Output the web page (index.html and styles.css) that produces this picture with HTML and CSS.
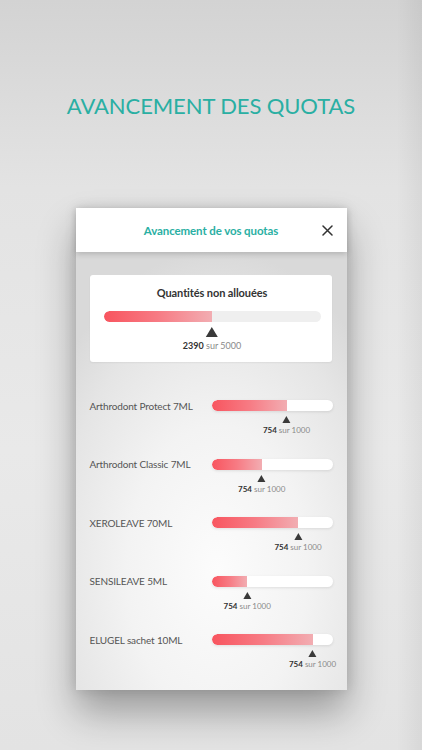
FILE: index.html
```html
<!DOCTYPE html>
<html lang="fr">
<head>
<meta charset="utf-8">
<title>Avancement des quotas</title>
<link rel="stylesheet" href="styles.css">
</head>
<body>
<div class="page">
  <h1 class="title">AVANCEMENT DES QUOTAS</h1>
  <div class="modal">
    <div class="modal-header">
      <span></span>
      <h2 class="modal-title">Avancement de vos quotas</h2>
      <button class="close" aria-label="Fermer">
        <svg width="11" height="11" viewBox="0 0 11 11"><path d="M1 1L10 10M10 1L1 10" stroke="#333" stroke-width="1.5" stroke-linecap="round"/></svg>
      </button>
    </div>
    <div class="modal-body">
      <div class="card">
        <div class="card-title">Quantités non allouées</div>
        <div class="track track-grey"><div class="fill" style="width:50%"></div></div>
        <div class="pin-line" style="--p:50%">
          <div class="pin pin-big">
            <span class="tri tri-big"></span>
            <span class="count"><b>2390</b> sur 5000</span>
          </div>
        </div>
      </div>
      <div class="rows">
        <div class="row">
          <div class="label">Arthrodont Protect 7ML</div>
          <div class="meter">
            <div class="track"><div class="fill" style="width:62%"></div></div>
            <div class="pin-line" style="--p:62%"><div class="pin"><span class="tri"></span><span class="count small"><b>754</b> sur 1000</span></div></div>
          </div>
        </div>
        <div class="row">
          <div class="label">Arthrodont Classic 7ML</div>
          <div class="meter">
            <div class="track"><div class="fill" style="width:41.5%"></div></div>
            <div class="pin-line" style="--p:41.5%"><div class="pin"><span class="tri"></span><span class="count small"><b>754</b> sur 1000</span></div></div>
          </div>
        </div>
        <div class="row">
          <div class="label">XEROLEAVE 70ML</div>
          <div class="meter">
            <div class="track"><div class="fill" style="width:71.5%"></div></div>
            <div class="pin-line" style="--p:71.5%"><div class="pin"><span class="tri"></span><span class="count small"><b>754</b> sur 1000</span></div></div>
          </div>
        </div>
        <div class="row">
          <div class="label">SENSILEAVE 5ML</div>
          <div class="meter">
            <div class="track"><div class="fill" style="width:29.5%"></div></div>
            <div class="pin-line" style="--p:29.5%"><div class="pin"><span class="tri"></span><span class="count small"><b>754</b> sur 1000</span></div></div>
          </div>
        </div>
        <div class="row">
          <div class="label">ELUGEL sachet 10ML</div>
          <div class="meter">
            <div class="track"><div class="fill" style="width:83.5%"></div></div>
            <div class="pin-line" style="--p:83.5%"><div class="pin"><span class="tri"></span><span class="count small"><b>754</b> sur 1000</span></div></div>
          </div>
        </div>
      </div>
    </div>
  </div>
</div>
</body>
</html>
```
FILE: styles.css
```css
html, body {
  margin: 0;
  padding: 0;
}
body {
  width: 422px;
  height: 750px;
  overflow: hidden;
  font-family: Lato, "Liberation Sans", sans-serif;
  background:
    linear-gradient(90deg, rgba(0,0,0,0) 94%, rgba(0,0,0,0.05) 100%),
    linear-gradient(180deg, #d3d3d3 0%, #e3e3e3 25%, #e9e9e9 60%, #e3e3e3 100%);
}
.page {
  display: flex;
  flex-direction: column;
  align-items: center;
}
.title {
  margin: 91px 0 0;
  font-size: 22px;
  line-height: 30px;
  font-weight: 400;
  color: #2aafa3;
  letter-spacing: -0.1px;
}
.modal {
  margin-top: 87px;
  width: 271px;
  height: 482px;
  display: flex;
  flex-direction: column;
  box-shadow: 0 22px 36px rgba(0,0,0,0.32), 0 0 12px rgba(0,0,0,0.12);
  background: radial-gradient(ellipse 200px 320px at 52% 75%, #fcfcfc 0%, #f3f3f3 45%, #e5e5e5 80%, #d9d9d9 100%);
}
.modal-header {
  position: relative;
  z-index: 1;
  height: 44px;
  flex: none;
  background: #fff;
  display: grid;
  grid-template-columns: 1fr auto 1fr;
  align-items: center;
  box-shadow: 0 2px 6px rgba(0,0,0,0.18);
}
.modal-title {
  margin: 0;
  font-size: 11.5px;
  font-weight: 700;
  color: #2aafa3;
  letter-spacing: -0.1px;
}
.close {
  justify-self: end;
  margin-right: 14px;
  border: 0;
  background: none;
  padding: 0;
  width: 11px;
  height: 11px;
  display: flex;
}
.modal-body {
  padding: 23px 15px 0 14px;
}
.card {
  background: #fff;
  border-radius: 3px;
  height: 87px;
  box-sizing: border-box;
  padding: 11px 11px 0 14px;
  box-shadow: 0 1px 2px rgba(0,0,0,0.06);
}
.card-title {
  text-align: center;
  font-size: 11px;
  line-height: 14px;
  font-weight: 700;
  color: #333;
  margin-bottom: 11px;
  letter-spacing: -0.1px;
}
.track {
  height: 11px;
  border-radius: 6px;
  background: #fff;
  overflow: hidden;
  box-shadow: 0 1px 3px rgba(0,0,0,0.10);
}
.track-grey {
  background: #efefef;
  box-shadow: none;
}
.fill {
  height: 100%;
  border-radius: 6px 0 0 6px;
  background: linear-gradient(90deg, #f8555f 0%, #f77b84 50%, #f2adb2 100%);
}
.pin-line {
  display: flex;
}
.pin {
  flex: none;
  margin-left: var(--p);
  transform: translateX(-50%);
  display: flex;
  flex-direction: column;
  align-items: center;
  width: max-content;
  white-space: nowrap;
  padding-top: 5px;
}
.tri {
  width: 0;
  height: 0;
  border-left: 4.5px solid transparent;
  border-right: 4.5px solid transparent;
  border-bottom: 7px solid #3a3a3a;
}
.tri-big {
  border-left-width: 6px;
  border-right-width: 6px;
  border-bottom-width: 10px;
}
.count {
  font-size: 9px;
  line-height: 13px;
  margin-top: 2px;
  color: #8a8a8a;
}
.count b {
  color: #333;
  font-weight: 700;
}
.count.small {
  font-size: 8px;
  line-height: 12px;
  margin-top: 1px;
}
.rows {
  padding-top: 38px;
  display: flex;
  flex-direction: column;
}
.row {
  display: grid;
  grid-template-columns: 122px 1fr;
  height: 58.5px;
}
.label {
  font-size: 10px;
  line-height: 11px;
  color: #555;
  padding-top: 0.5px;
  letter-spacing: -0.15px;
}
.meter {
  margin-right: -1px;
}
```
